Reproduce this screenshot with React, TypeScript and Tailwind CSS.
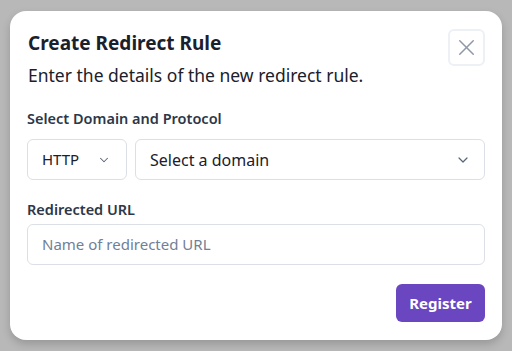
import { ChevronDown, X } from "lucide-react";

export default function App() {
  return (
    <div
      className="w-[512px] h-[351px] bg-[#b8b8b8] pt-[11px] pl-[10px]"
      style={{ fontFamily: '"Noto Sans", "Open Sans", sans-serif' }}
    >
      <div className="w-[492px] h-[329px] bg-white rounded-[16px] shadow-[0_4px_8px_rgba(0,0,0,0.18)] px-[17px] pt-[18px]">
        {/* Header */}
        <div className="flex justify-between items-start">
          <div className="pl-[1px]">
            <h2 className="text-[19px] font-bold text-[#1a202c] leading-[24px] mt-[2px]">Create Redirect Rule</h2>
            <p className="text-[17.5px] text-[#1a202c] leading-[24px] mt-[8px]">
              Enter the details of the new redirect rule.
            </p>
          </div>
          <button className="w-[37px] h-[37px] border-2 border-[#edf0f4] rounded-[6px] flex items-center justify-center text-[#8f98a8]">
            <X className="w-[27px] h-[27px]" strokeWidth={1.3} />
          </button>
        </div>

        {/* Domain + protocol */}
        <label className="block text-[14.5px] font-semibold text-[#2d3748] mt-[21px] leading-[20px]">
          Select Domain and Protocol
        </label>
        <div className="flex gap-[8px] mt-[11px]">
          <div className="w-[100px] h-[41px] border border-[#dcdfe6] rounded-[6px] flex items-center justify-between pl-[14px] pr-[15px] text-[15px] text-[#1a202c]">
            <span>HTTP</span>
            <ChevronDown className="w-[14px] h-[14px] text-[#5a6478]" strokeWidth={1.8} />
          </div>
          <div className="flex-1 h-[41px] border border-[#dcdfe6] rounded-[6px] flex items-center justify-between pl-[14px] pr-[13px] text-[16px] text-[#1a202c]">
            <span>Select a domain</span>
            <ChevronDown className="w-[16px] h-[16px] text-[#5a6478]" strokeWidth={1.8} />
          </div>
        </div>

        {/* Redirected URL */}
        <label className="block text-[14.5px] font-semibold text-[#2d3748] mt-[19px] leading-[20px]">
          Redirected URL
        </label>
        <div className="mt-[5px] h-[41px] border border-[#dcdfe6] rounded-[6px] flex items-center pl-[14px] text-[15px] text-[#718096]">
          Name of redirected URL
        </div>

        <div className="flex justify-end mt-[19px]">
          <button className="w-[89px] h-[38px] bg-[#6b46c1] rounded-[6px] text-white text-[15px] font-bold">
            Register
          </button>
        </div>
      </div>
    </div>
  );
}
